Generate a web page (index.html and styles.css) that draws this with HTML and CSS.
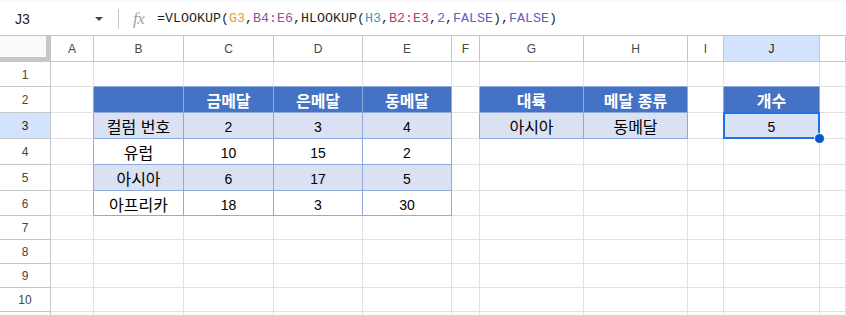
FILE: index.html
```html
<!DOCTYPE html>
<html lang="ko">
<head>
<meta charset="utf-8">
<title>Sheet</title>
<link rel="stylesheet" href="styles.css">
</head>
<body>
<div class="app">
  <div class="toolbar">
    <div class="namebox">
      <span class="ref">J3</span>
      <span class="caret"></span>
    </div>
    <div class="sep"></div>
    <span class="fx">fx</span>
    <div class="formula">=VLOOKUP(<span class="c1">G3</span>,<span class="c2">B4:E6</span>,HLOOKUP(<span class="c3">H3</span>,<span class="c4">B2:E3</span>,<span class="c5">2</span>,<span class="c6">FALSE</span>),<span class="c6">FALSE</span>)</div>
  </div>
  <div class="sheet">
    <!-- header row -->
    <div class="corner"></div>
    <div class="ch">A</div><div class="ch">B</div><div class="ch">C</div><div class="ch">D</div><div class="ch">E</div><div class="ch">F</div><div class="ch">G</div><div class="ch">H</div><div class="ch">I</div><div class="ch sel">J</div><div class="ch"></div>
    <!-- row 1 -->
    <div class="rh">1</div>
    <div class="c"></div><div class="c tb"></div><div class="c tb"></div><div class="c tb"></div><div class="c tb"></div><div class="c"></div><div class="c tb"></div><div class="c tb"></div><div class="c"></div><div class="c tb"></div><div class="c"></div>
    <!-- row 2 -->
    <div class="rh">2</div>
    <div class="c lb"></div>
    <div class="c t th"></div>
    <div class="c t th ko">금메달</div>
    <div class="c t th ko">은메달</div>
    <div class="c t th ko">동메달</div>
    <div class="c lb"></div>
    <div class="c t th ko">대륙</div>
    <div class="c t th ko">메달 종류</div>
    <div class="c lb"></div>
    <div class="c t th ko">개수</div>
    <div class="c"></div>
    <!-- row 3 -->
    <div class="rh sel">3</div>
    <div class="c lb"></div>
    <div class="c t band ko">컬럼 번호</div>
    <div class="c t band">2</div>
    <div class="c t band">3</div>
    <div class="c t band">4</div>
    <div class="c lb"></div>
    <div class="c t band ko">아시아</div>
    <div class="c t band ko">동메달</div>
    <div class="c lb"></div>
    <div class="c t band active">5<span class="handle"></span></div>
    <div class="c"></div>
    <!-- row 4 -->
    <div class="rh">4</div>
    <div class="c lb"></div>
    <div class="c t ko">유럽</div>
    <div class="c t">10</div>
    <div class="c t">15</div>
    <div class="c t">2</div>
    <div class="c"></div><div class="c"></div><div class="c"></div><div class="c"></div><div class="c"></div><div class="c"></div>
    <!-- row 5 -->
    <div class="rh">5</div>
    <div class="c lb"></div>
    <div class="c t band ko">아시아</div>
    <div class="c t band">6</div>
    <div class="c t band">17</div>
    <div class="c t band">5</div>
    <div class="c"></div><div class="c"></div><div class="c"></div><div class="c"></div><div class="c"></div><div class="c"></div>
    <!-- row 6 -->
    <div class="rh">6</div>
    <div class="c lb"></div>
    <div class="c t ko">아프리카</div>
    <div class="c t">18</div>
    <div class="c t">3</div>
    <div class="c t">30</div>
    <div class="c"></div><div class="c"></div><div class="c"></div><div class="c"></div><div class="c"></div><div class="c"></div>
    <!-- row 7 -->
    <div class="rh">7</div>
    <div class="c"></div><div class="c"></div><div class="c"></div><div class="c"></div><div class="c"></div><div class="c"></div><div class="c"></div><div class="c"></div><div class="c"></div><div class="c"></div><div class="c"></div>
    <!-- row 8 -->
    <div class="rh">8</div>
    <div class="c"></div><div class="c"></div><div class="c"></div><div class="c"></div><div class="c"></div><div class="c"></div><div class="c"></div><div class="c"></div><div class="c"></div><div class="c"></div><div class="c"></div>
    <!-- row 9 -->
    <div class="rh">9</div>
    <div class="c"></div><div class="c"></div><div class="c"></div><div class="c"></div><div class="c"></div><div class="c"></div><div class="c"></div><div class="c"></div><div class="c"></div><div class="c"></div><div class="c"></div>
    <!-- row 10 -->
    <div class="rh">10</div>
    <div class="c"></div><div class="c"></div><div class="c"></div><div class="c"></div><div class="c"></div><div class="c"></div><div class="c"></div><div class="c"></div><div class="c"></div><div class="c"></div><div class="c"></div>
    <!-- row 11 (only its top edge is visible) -->
    <div class="rh"></div>
    <div class="c"></div><div class="c"></div><div class="c"></div><div class="c"></div><div class="c"></div><div class="c"></div><div class="c"></div><div class="c"></div><div class="c"></div><div class="c"></div><div class="c"></div>
  </div>
</div>
</body>
</html>
```

FILE: styles.css
```css
* { box-sizing: border-box; }
html, body {
  margin: 0;
  padding: 0;
  background: #ffffff;
  overflow: hidden;
}
.app {
  width: 846px;
  height: 315px;
  overflow: hidden;
  font-family: "Liberation Sans", Arial, "Noto Sans CJK KR", sans-serif;
}

/* formula bar */
.toolbar {
  height: 36px;
  display: flex;
  align-items: center;
  border-top: 2px solid #f8fafd;
  border-bottom: 1px solid #c4c7c5;
  background: #ffffff;
}
.namebox {
  width: 109px;
  display: flex;
  align-items: center;
  padding-left: 15px;
  padding-right: 6px;
}
.ref {
  font-size: 14px;
  color: #1f1f1f;
  flex: 1;
}
.caret {
  width: 0;
  height: 0;
  border-left: 4px solid transparent;
  border-right: 4px solid transparent;
  border-top: 4px solid #444746;
}
.sep {
  width: 1px;
  height: 20px;
  background: #c4c7c5;
  margin-left: 9px;
}
.fx {
  margin-left: 14px;
  width: 24px;
  font-family: "Liberation Serif", serif;
  font-style: italic;
  font-size: 17px;
  color: #a0a0a0;
  letter-spacing: -0.5px;
}
.formula {
  font-family: "Liberation Mono", "DejaVu Sans Mono", monospace;
  font-size: 13.33px;
  color: #1f1f1f;
  white-space: nowrap;
}
.c1 { color: #f09a2a; }
.c2 { color: #9b4ba8; }
.c3 { color: #25a2c8; }
.c4 { color: #b83e6a; }
.c5 { color: #3f73dd; }
.c6 { color: #5864c6; }

/* grid */
.sheet {
  display: grid;
  grid-template-columns: 51px 43px 90px 90px 89px 89px 28px 104px 104px 36px 96px 1fr;
  grid-template-rows: 26px 25px 26px 26px 26px 26px 25px 24px 24px 24px 24px 24px;
}
.corner {
  background: #f8f9fa;
  border-right: 1px solid #c4c7c5;
  border-bottom: 1px solid #c4c7c5;
  box-shadow: inset -4px -4px 0 #c7c7c7;
}
.ch, .rh {
  display: flex;
  align-items: center;
  justify-content: center;
  font-size: 12px;
  color: #444746;
  border-right: 1px solid #c4c7c5;
  border-bottom: 1px solid #c4c7c5;
  background: #ffffff;
  padding-top: 1px;
}
.sel { background: #d3e3fd; color: #1f1f1f; }

.c {
  position: relative;
  display: flex;
  align-items: center;
  justify-content: center;
  border-right: 1px solid #e1e1e1;
  border-bottom: 1px solid #e1e1e1;
  font-size: 14px;
  color: #000000;
  white-space: nowrap;
  padding-top: 3px;
}
.ko {
  font-family: "Noto Sans CJK KR", sans-serif;
  font-size: 16px;
  padding-top: 1px;
}
.t { border-right-color: #8eaadc; border-bottom-color: #8eaadc; }
.tb { border-bottom-color: #8eaadc; }
.lb { border-right-color: #8eaadc; }
.th {
  background: #4472c4;
  color: #ffffff;
  font-weight: 700;
}
.band { background: #d9e1f2; }

.active::after {
  content: "";
  position: absolute;
  left: -1px;
  top: -1px;
  right: -1px;
  bottom: -1px;
  border: 2px solid #1a73e8;
}
.handle {
  position: absolute;
  right: -6px;
  bottom: -6px;
  width: 11px;
  height: 11px;
  border-radius: 50%;
  background: #0b57d0;
  border: 1px solid #ffffff;
  z-index: 2;
}
```
